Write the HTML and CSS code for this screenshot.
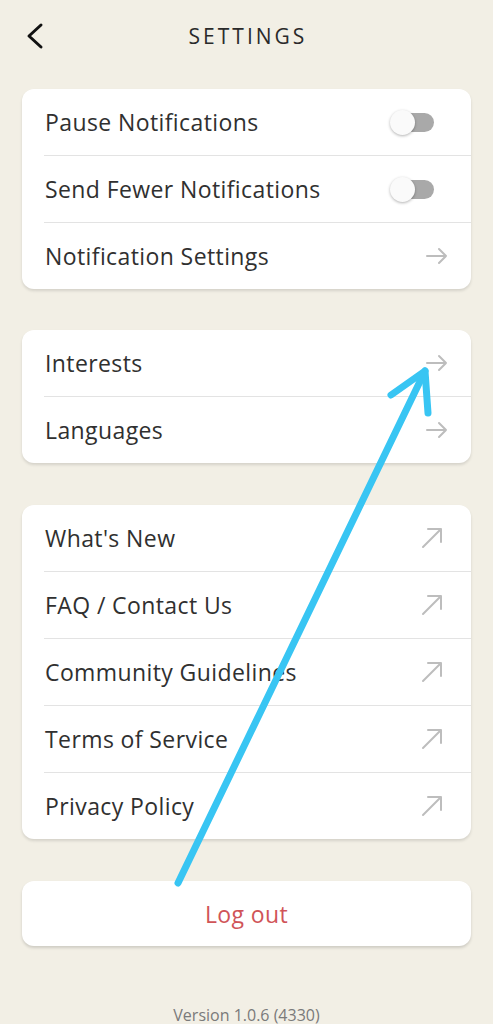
FILE: index.html
```html
<!DOCTYPE html>
<html>
<head>
  <title>Settings</title>
  <link rel="stylesheet" href="styles.css">
</head>
<body>
  <div class="page">
    <header class="topbar">
      <svg class="back" width="20" height="30" viewBox="0 0 20 30">
        <path d="M16 4 L4 15 L16 26" fill="none" stroke="#111" stroke-width="3" stroke-linecap="round" stroke-linejoin="round"/>
      </svg>
      <h1 class="title">SETTINGS</h1>
    </header>

    <div class="card">
      <div class="row">
        <span>Pause Notifications</span>
        <span class="switch"><span class="knob"></span></span>
      </div>
      <div class="row">
        <span>Send Fewer Notifications</span>
        <span class="switch"><span class="knob"></span></span>
      </div>
      <div class="row">
        <span>Notification Settings</span>
        <svg class="icon" width="24" height="20" viewBox="0 0 24 20"><path d="M2 10 H21 M14 3 L21 10 L14 17" /></svg>
      </div>
    </div>

    <div class="card">
      <div class="row">
        <span>Interests</span>
        <svg class="icon" width="24" height="20" viewBox="0 0 24 20"><path d="M2 10 H21 M14 3 L21 10 L14 17" /></svg>
      </div>
      <div class="row">
        <span>Languages</span>
        <svg class="icon" width="24" height="20" viewBox="0 0 24 20"><path d="M2 10 H21 M14 3 L21 10 L14 17" /></svg>
      </div>
    </div>

    <div class="card links">
      <div class="row">
        <span>What's New</span>
        <svg class="icon ext" width="24" height="24" viewBox="0 0 24 24"><path d="M3 21 L21 3 M8 3 H21 V16" /></svg>
      </div>
      <div class="row">
        <span>FAQ / Contact Us</span>
        <svg class="icon ext" width="24" height="24" viewBox="0 0 24 24"><path d="M3 21 L21 3 M8 3 H21 V16" /></svg>
      </div>
      <div class="row">
        <span>Community Guidelines</span>
        <svg class="icon ext" width="24" height="24" viewBox="0 0 24 24"><path d="M3 21 L21 3 M8 3 H21 V16" /></svg>
      </div>
      <div class="row">
        <span>Terms of Service</span>
        <svg class="icon ext" width="24" height="24" viewBox="0 0 24 24"><path d="M3 21 L21 3 M8 3 H21 V16" /></svg>
      </div>
      <div class="row">
        <span>Privacy Policy</span>
        <svg class="icon ext" width="24" height="24" viewBox="0 0 24 24"><path d="M3 21 L21 3 M8 3 H21 V16" /></svg>
      </div>
    </div>

    <button class="logout">Log out</button>

    <p class="version">Version 1.0.6 (4330)</p>

    <!-- hand drawn annotation on top of the screenshot -->
    <svg class="annotation" width="493" height="1024" viewBox="0 0 493 1024">
      <path d="M178 883 L425 371" />
      <path d="M391 395 L425 371 L428 413" />
    </svg>
  </div>
</body>
</html>
```

FILE: styles.css
```css
body {
  margin: 0;
  background-color: #f2efe5;
  font-family: "Open Sans", "Noto Sans", sans-serif;
  color: #303030;
}

.page {
  position: relative;
  width: 493px;
  height: 1024px;
  overflow: hidden;
}

.topbar {
  position: relative;
  height: 72px;
  display: flex;
  align-items: center;
  justify-content: center;
}

.back {
  position: absolute;
  left: 25px;
  top: 21px;
}

.title {
  margin: 0 0 0 3px;
  font-size: 21px;
  font-weight: 400;
  letter-spacing: 3px;
  color: #2a2a2a;
}

.card {
  background-color: #fff;
  margin: 17px 22px 41px;
  border-radius: 12px;
  box-shadow: 0 2px 3px rgba(0, 0, 0, 0.12);
  overflow: hidden;
}

.card.links {
  margin-top: 42px;
}

.row {
  height: 66px;
  margin-left: 22px;
  padding: 0 24px 0 1px;
  display: flex;
  align-items: center;
  justify-content: space-between;
  font-size: 23px;
  letter-spacing: 0.4px;
}

.row + .row {
  border-top: 1px solid #e3e3e3;
}

.icon path {
  fill: none;
  stroke: #bdbdbd;
  stroke-width: 2;
  stroke-linecap: round;
  stroke-linejoin: round;
}

.icon {
  margin-right: -2px;
}

.icon.ext {
  margin-right: 3px;
}

.switch {
  position: relative;
  width: 40px;
  height: 19px;
  margin-right: 13px;
  border-radius: 10px;
  background-color: #a9a9a9;
}

.knob {
  position: absolute;
  left: -4px;
  top: -3px;
  width: 25px;
  height: 25px;
  border-radius: 50%;
  background-color: #fafafa;
  box-shadow: 0 1px 3px rgba(0, 0, 0, 0.3);
}

.logout {
  display: block;
  width: 449px;
  height: 65px;
  margin: 42px 22px 0;
  border: none;
  border-radius: 12px;
  background-color: #fff;
  box-shadow: 0 2px 3px rgba(0, 0, 0, 0.15);
  font-family: inherit;
  font-size: 23px;
  letter-spacing: 0.4px;
  color: #d05458;
}

.version {
  margin: 61px 0 0;
  line-height: 16px;
  text-align: center;
  font-size: 16px;
  color: #7a7a7a;
}

.annotation {
  position: absolute;
  left: 0;
  top: 0;
  pointer-events: none;
}

.annotation path {
  fill: none;
  stroke: #38c5f3;
  stroke-width: 7;
  stroke-linecap: round;
  stroke-linejoin: round;
}
```
